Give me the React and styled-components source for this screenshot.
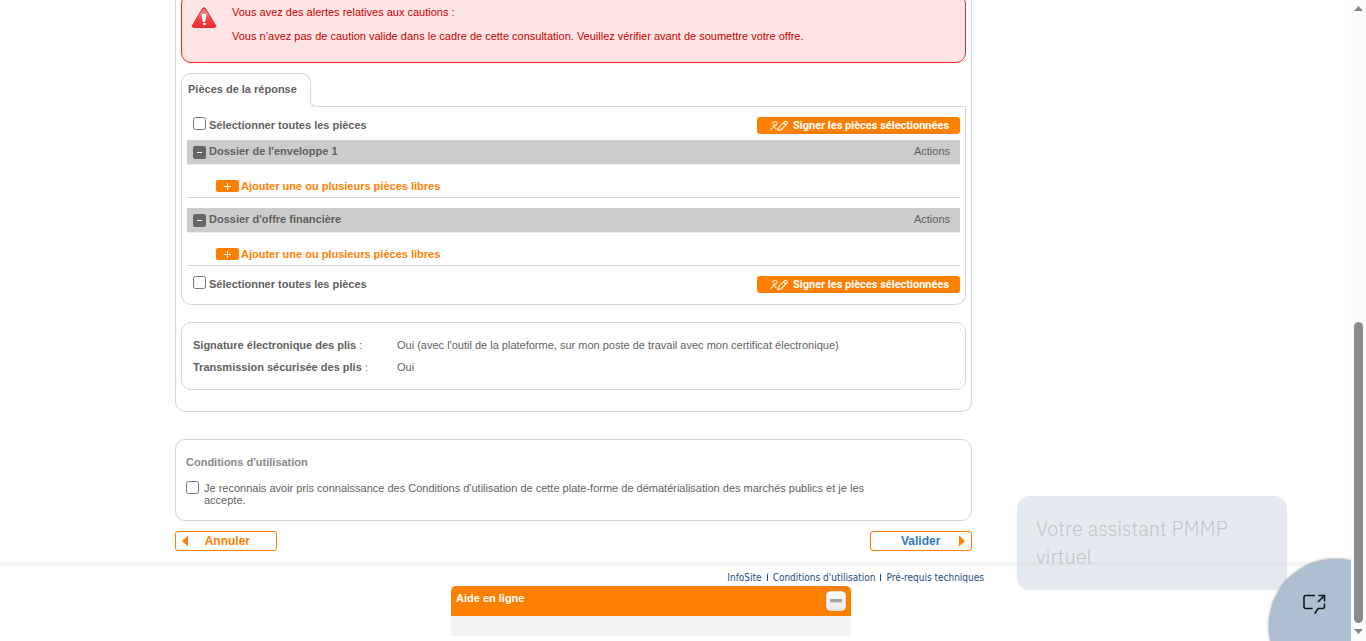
import React from "react";
import styled, { createGlobalStyle } from "styled-components";

const GlobalStyle = createGlobalStyle`
  *, *::before, *::after { box-sizing: border-box; }
  body {
    margin: 0;
    background: #fff;
    color: #5f5f5f;
    font: 11px/12px "Liberation Sans", Arial, sans-serif;
    overflow: hidden;
  }
  button { font: inherit; cursor: pointer; }
  a { text-decoration: none; }
`;

const Window = styled.div`
  display: grid;
  grid-template-columns: minmax(0, 1fr) 15px;
  height: 100vh;
  overflow: hidden;
  position: relative;
`;

const Page = styled.div`
  overflow: hidden;
`;

const Wrapper = styled.div`
  max-width: 1001px;
  margin: 0 auto;
`;

const Main = styled.main`
  max-width: 797px;
`;

const Frame = styled.section`
  border: 1px solid #d6d6d6;
  border-radius: 10px;
`;

const Consultation = styled(Frame)`
  border-top: 0;
  border-top-left-radius: 0;
  border-top-right-radius: 0;
  padding: 0 5px 21px;
`;

const Alert = styled.div`
  display: flex;
  gap: 16px;
  height: 69px;
  margin-top: -6px;
  padding: 11px 10px;
  border: 1px solid #fb2222;
  border-radius: 10px;
  background: #fee5e5;
  color: #cc0000;
`;

const AlertText = styled.div`
  p { margin: 0 0 12px; }
`;

const TabRow = styled.div`
  display: flex;
  align-items: flex-end;
  height: 34px;
  margin-top: 10px;
`;

const Tab = styled.h2`
  flex: none;
  width: 130px;
  height: 34px;
  margin: 0;
  padding: 8px 6px;
  border: 1px solid #d6d6d6;
  border-bottom: 0;
  border-radius: 10px 10px 0 0;
  font-size: 11px;
  line-height: 14px;
`;

const TabLineBack = styled.div`
  flex: 1;
  height: 22px;
  margin-left: -1px;
  background: #fff;
  position: relative;
`;

const TabLine = styled.div`
  height: 100%;
  border: 1px solid #d6d6d6;
  border-width: 0 0 1px 1px;
  border-bottom-left-radius: 6px;
`;

const TabBody = styled.div`
  padding: 10px 5px 11px;
  border: 1px solid #d6d6d6;
  border-top: 0;
  border-radius: 0 0 10px 10px;
`;

const SelectionRow = styled.div`
  display: flex;
  align-items: flex-start;
  justify-content: space-between;
  padding-left: 6px;
`;

const Checkbox = styled.input.attrs({ type: "checkbox" })`
  flex: none;
  width: 13px;
  height: 13px;
  margin: 0;
`;

const SelectAll = styled.label`
  display: flex;
  gap: 3px;
  font-weight: bold;
  line-height: 17px;
`;

const SignButton = styled.button`
  display: flex;
  align-items: center;
  gap: 4px;
  width: 203px;
  height: 17px;
  padding: 0 0 0 12px;
  border: 0;
  border-radius: 3px;
  background: #ff8000;
  color: #fff;
  font-family: Roboto, "Liberation Sans", sans-serif;
  font-weight: bold;
  white-space: nowrap;
  svg { flex: none; }
`;

const FolderBar = styled.div`
  display: flex;
  align-items: flex-start;
  height: 25px;
  padding: 5px 10px 0 6px;
  border-bottom: 1px solid #ececec;
  background: #ccc;
`;

const FolderName = styled.h3`
  flex: 1;
  margin: 0 3px;
  font-size: 11px;
`;

const ToggleButton = styled.button`
  display: grid;
  place-items: center;
  width: 13px;
  height: 13px;
  margin-top: 1px;
  padding: 0;
  border: 0;
  border-radius: 2px;
  background: #666;
`;

const FolderBody = styled.div`
  height: 33px;
  padding: 15px 29px 0;
  border-bottom: 1px solid #d6d6d6;
`;

const Folder = styled.section`
  margin-top: ${(p) => (p.$first ? 6 : 10)}px;
`;

const AddButton = styled.button`
  display: flex;
  align-items: center;
  gap: 2px;
  padding: 0;
  border: 0;
  background: none;
  color: #ff8000;
  font-weight: bold;
  line-height: 12px;
`;

const AddBadge = styled.span`
  display: grid;
  place-items: center;
  width: 23px;
  height: 12px;
  border-radius: 2px;
  background: #ff8000;
`;

const Summary = styled.dl`
  display: grid;
  grid-template-columns: 204px 1fr;
  row-gap: 10px;
  height: 68px;
  margin: 17px 0 0;
  padding: 16px 11px;
  border: 1px solid #d6d6d6;
  border-radius: 10px;
  dt, dd { margin: 0; }
`;

const Terms = styled(Frame)`
  height: 82px;
  margin-top: 27px;
  padding: 16px 10px;
`;

const TermsTitle = styled.h2`
  margin: 0 0 13px;
  color: #888;
  font-size: 11px;
`;

const TermsLabel = styled.label`
  display: flex;
  gap: 5px;
  max-width: 700px;
  span { padding-top: 1px; }
`;

const Actions = styled.div`
  display: flex;
  justify-content: space-between;
  margin-top: 10px;
`;

const ActionButton = styled.button`
  display: flex;
  align-items: center;
  justify-content: space-between;
  width: 102px;
  height: 20px;
  padding: ${(p) => (p.$forward ? "0 6px 0 30px" : "0 26px 0 6px")};
  border: 1px solid #ff8000;
  border-radius: 3px;
  background: #fff;
  color: ${(p) => (p.$forward ? "#337ab7" : "#ff8000")};
  font-size: 12px;
  font-weight: bold;
`;

const Footer = styled.footer`
  margin-top: 11px;
  border-top: 4px solid #f4f4f4;
`;

const FooterLinks = styled.nav`
  display: flex;
  justify-content: flex-end;
  max-width: 809px;
  height: 20px;
  font: 10px/24px "DejaVu Sans Condensed", "DejaVu Sans", Tahoma, sans-serif;
  font-stretch: condensed;
  a { color: #1d4a7d; }
  a + a::before {
    content: "";
    display: inline-block;
    width: 1px;
    height: 7px;
    margin: 0 5px;
    background: #1d4a7d;
  }
`;

const Help = styled.aside`
  max-width: 400px;
  height: 50px;
  margin-left: 276px;
  border-radius: 5px 5px 0 0;
  background: #f2f2f2;
  overflow: hidden;
`;

const HelpHeader = styled.div`
  display: flex;
  justify-content: space-between;
  height: 30px;
  padding: 5px 5px 0;
  background: #ff8000;
  color: #fff;
  font-weight: bold;
  line-height: 14px;
`;

const MinimizeButton = styled.button`
  display: grid;
  place-items: center;
  width: 20px;
  height: 20px;
  padding: 0;
  border: 1px solid #ddd;
  border-radius: 4px;
  background: linear-gradient(#fff, #e9e9e9);
  box-shadow: 0 0 1px #a65300;
`;

const AssistantLayer = styled.div`
  position: absolute;
  inset: 0 15px 0 0;
  overflow: hidden;
  pointer-events: none;
`;

const AssistantBubble = styled.div`
  position: absolute;
  right: 64px;
  bottom: 51px;
  width: 270px;
  height: 94px;
  padding: 19px;
  border-radius: 12px;
  background: rgba(197, 208, 223, 0.45);
  color: #bfc4c9;
  font: 300 20px/28px "IBM Plex Sans", "Open Sans", sans-serif;
`;

const AssistantButton = styled.button`
  display: flex;
  align-items: flex-start;
  position: absolute;
  right: -52px;
  bottom: -52px;
  width: 134px;
  height: 134px;
  padding: 34px 33px;
  border: 0;
  border-radius: 50%;
  background: #afbfd2;
  box-shadow: 0 0 3px rgba(0, 0, 0, 0.5);
  pointer-events: auto;
`;

const ScrollTrack = styled.div`
  display: flex;
  flex-direction: column;
  align-items: center;
  justify-content: space-between;
  padding: 6px 0 7px;
  background: #fcfcfc;
`;

const ScrollThumb = styled.div`
  width: 9px;
  height: 301px;
  margin: auto 0 6px;
  border-radius: 5px;
  background: #8b8b8b;
`;

const AlertIcon = () => (
  <svg width="24" height="22" viewBox="0 0 24 22" aria-hidden="true">
    <defs>
      <linearGradient id="warning" x1="0" y1="0" x2="0" y2="1">
        <stop offset="0" stopColor="#dc5b5b" />
        <stop offset=".3" stopColor="#f18a8a" />
        <stop offset=".55" stopColor="#ee4747" />
        <stop offset="1" stopColor="#fb2929" />
      </linearGradient>
    </defs>
    <path d="M12 1.8 C13 1.8 13.5 2.3 14 3.2 L23.3 19 C24 20.5 23.5 21.5 22 21.5 H2 C.5 21.5 0 20.5 .7 19 L10 3.2 C10.5 2.3 11 1.8 12 1.8Z" fill="url(#warning)" stroke="#d83535" />
    <path d="M10 8h4v4l-1 4h-2l-1-4zM11 17h3v2h-3z" fill="#fff" />
  </svg>
);

const SignIcon = () => (
  <svg width="20" height="12" viewBox="0 0 20 12" fill="none" stroke="#fff" aria-hidden="true">
    <path d="M3 3.5C4 1 8 .8 8 3C8 5.3 6 6 3 6.2M5.5 3.5C5 6 3.8 9 1 9.5M4.5 6.3C6 6.5 6.2 9.5 8.7 9.5" strokeWidth="1.1" opacity=".8" />
    <path d="M9.2 10.5L10 7.2L15.7 1.7Q16.5 1 17.2 1.7L18 2.4Q18.6 3.1 17.9 3.8L12.2 9.7ZM14.6 3L16.8 5.2" strokeWidth="1.1" />
  </svg>
);

const Minus = () => (
  <svg width="5" height="3" viewBox="0 0 5 3" aria-hidden="true">
    <path d="M0 1h5v1H0z" fill="#fff" />
  </svg>
);

const Plus = () => (
  <svg width="7" height="8" viewBox="0 0 7 8" aria-hidden="true">
    <path d="M3 1h1v3h3v1H4v3H3V5H0V4h3z" fill="#fff" />
  </svg>
);

const Arrow = ({ forward }) => (
  <svg width="6" height="12" viewBox="0 0 6 12" aria-hidden="true">
    <path d={forward ? "M0 0.5L6 6L0 11.5Z" : "M6 0.5L0 6L6 11.5Z"} fill="#ff8000" />
  </svg>
);

const ChatLaunchIcon = () => (
  <svg width="24" height="22" viewBox="0 0 24 22" fill="none" stroke="#161616" strokeWidth="1.6" aria-hidden="true">
    <path d="M13 2.5H4Q2 2.5 2 4.5V13.5Q2 15.5 4 15.5H10.7M22.5 10.5V13.5Q22.5 15.5 20.5 15.5H16L12.7 20.7" />
    <path d="M16.5 2.5H22.5V8.5M22.5 2.5L16 9" />
  </svg>
);

const ScrollArrow = ({ down }) => (
  <svg width="9" height="5" viewBox="0 0 9 5" aria-hidden="true">
    <path d={down ? "M0 0H9L4.5 5Z" : "M0 5H9L4.5 0Z"} fill="#858585" />
  </svg>
);

const Selection = () => (
  <SelectionRow>
    <SelectAll>
      <Checkbox />
      Sélectionner toutes les pièces
    </SelectAll>
    <SignButton type="button">
      <SignIcon />
      Signer les pièces sélectionnées
    </SignButton>
  </SelectionRow>
);

const DocumentFolder = ({ name, first }) => (
  <Folder $first={first}>
    <FolderBar>
      <ToggleButton type="button" aria-label={`Replier ${name}`}>
        <Minus />
      </ToggleButton>
      <FolderName>{name}</FolderName>
      <span>Actions</span>
    </FolderBar>
    <FolderBody>
      <AddButton type="button">
        <AddBadge><Plus /></AddBadge>
        Ajouter une ou plusieurs pièces libres
      </AddButton>
    </FolderBody>
  </Folder>
);

const LastSelection = styled.div`
  margin-top: 10px;
`;

export default function App() {
  return (
    <Window>
      <GlobalStyle />
      <Page>
        <Wrapper>
          <Main>
            <Consultation>
              <Alert role="alert">
                <AlertIcon />
                <AlertText>
                  <p>Vous avez des alertes relatives aux cautions :</p>
                  <p>
                    Vous n’avez pas de caution valide dans le cadre de cette consultation. Veuillez
                    vérifier avant de soumettre votre offre.
                  </p>
                </AlertText>
              </Alert>
              <TabRow>
                <Tab>Pièces de la réponse</Tab>
                <TabLineBack><TabLine /></TabLineBack>
              </TabRow>
              <TabBody>
                <Selection />
                <DocumentFolder name="Dossier de l'enveloppe 1" first />
                <DocumentFolder name="Dossier d'offre financière" />
                <LastSelection><Selection /></LastSelection>
              </TabBody>
              <Summary>
                <dt><b>Signature électronique des plis</b> :</dt>
                <dd>Oui (avec l'outil de la plateforme, sur mon poste de travail avec mon certificat électronique)</dd>
                <dt><b>Transmission sécurisée des plis</b> :</dt>
                <dd>Oui</dd>
              </Summary>
            </Consultation>
            <Terms>
              <TermsTitle>Conditions d'utilisation</TermsTitle>
              <TermsLabel>
                <Checkbox />
                <span>
                  Je reconnais avoir pris connaissance des Conditions d'utilisation de cette
                  plate-forme de dématérialisation des marchés publics et je les accepte.
                </span>
              </TermsLabel>
            </Terms>
            <Actions>
              <ActionButton type="button"><Arrow />Annuler</ActionButton>
              <ActionButton type="button" $forward>Valider<Arrow forward /></ActionButton>
            </Actions>
          </Main>
        </Wrapper>
        <Footer>
          <Wrapper>
            <FooterLinks>
              <a href="#infosite">InfoSite</a>
              <a href="#conditions">Conditions d'utilisation</a>
              <a href="#prerequis">Pré-requis techniques</a>
            </FooterLinks>
            <Help>
              <HelpHeader>
                Aide en ligne
                <MinimizeButton type="button" aria-label="Réduire l'aide">
                  <svg width="14" height="4" viewBox="0 0 14 4" aria-hidden="true">
                    <path d="M1 0h12v3H1z" fill="#a5a5a5" />
                    <path d="M1 3h12v1H1z" fill="#d5d5d5" />
                  </svg>
                </MinimizeButton>
              </HelpHeader>
            </Help>
          </Wrapper>
        </Footer>
      </Page>
      <ScrollTrack aria-hidden="true">
        <ScrollArrow />
        <ScrollThumb />
        <ScrollArrow down />
      </ScrollTrack>
      <AssistantLayer>
        <AssistantBubble>Votre assistant PMMP virtuel</AssistantBubble>
        <AssistantButton type="button" aria-label="Ouvrir l'assistant">
          <ChatLaunchIcon />
        </AssistantButton>
      </AssistantLayer>
    </Window>
  );
}
